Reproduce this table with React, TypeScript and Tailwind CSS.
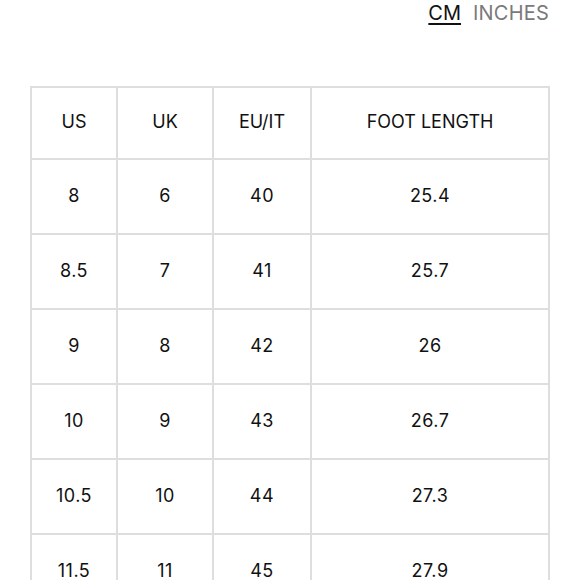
import React from "react";

const rows: string[][] = [
    ["8", "6", "40", "25.4"],
    ["8.5", "7", "41", "25.7"],
    ["9", "8", "42", "26"],
    ["10", "9", "43", "26.7"],
    ["10.5", "10", "44", "27.3"],
    ["11.5", "11", "45", "27.9"],
];

const cell = "border-2 border-[#dedede] text-center align-middle px-0 pt-0";

export default function App() {
    return (
        <div
            className="w-[580px] h-[580px] overflow-hidden bg-white text-[#111]"
            style={{ fontFamily: 'Inter, "Liberation Sans", Arial, sans-serif' }}
        >
            {/* Unit toggle */}
            <div className="flex justify-end gap-3 pr-[31px] pt-[1px] h-[86px] text-[20px] leading-[24px]">
                <span className="underline underline-offset-[3px] decoration-[2px] text-[#111]">
                    CM
                </span>
                <span className="text-[#7a7a7a] tracking-[0.2px]">INCHES</span>
            </div>

            {/* Size table */}
            <table className="ml-[30px] w-[520px] border-collapse table-fixed text-[18px]">
                <colgroup>
                    <col className="w-[86px]" />
                    <col className="w-[96px]" />
                    <col className="w-[98px]" />
                    <col />
                </colgroup>
                <thead>
                    <tr className="h-[72px]">
                        {["US", "UK", "EU/IT", "FOOT LENGTH"].map((h) => (
                            <th key={h} className={`${cell} pb-[3px] font-normal`}>
                                {h}
                            </th>
                        ))}
                    </tr>
                </thead>
                <tbody>
                    {rows.map((r, i) => (
                        <tr key={i} className="h-[75px]">
                            {r.map((v, j) => (
                                <td key={j} className={`${cell} pb-[2px] tracking-[0.5px]`}>
                                    {v}
                                </td>
                            ))}
                        </tr>
                    ))}
                </tbody>
            </table>
        </div>
    );
}
